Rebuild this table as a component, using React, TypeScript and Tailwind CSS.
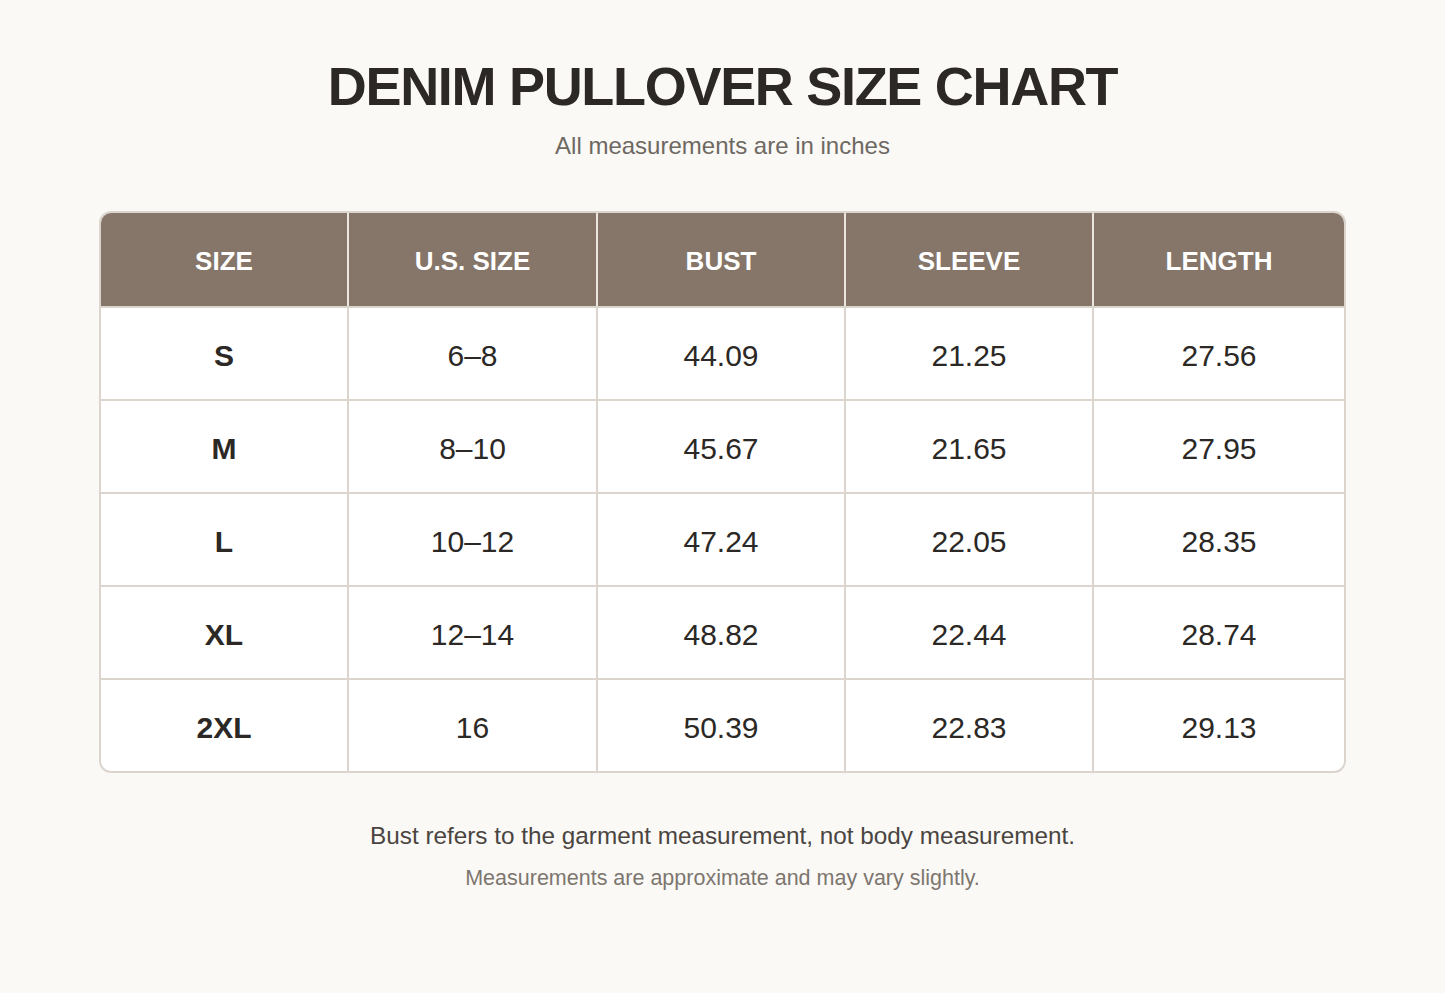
import React from "react";

const rows = [
  ["S", "6–8", "44.09", "21.25", "27.56"],
  ["M", "8–10", "45.67", "21.65", "27.95"],
  ["L", "10–12", "47.24", "22.05", "28.35"],
  ["XL", "12–14", "48.82", "22.44", "28.74"],
  ["2XL", "16", "50.39", "22.83", "29.13"],
];
const heads = ["SIZE", "U.S. SIZE", "BUST", "SLEEVE", "LENGTH"];

export default function App() {
  return (
    <div
      className="min-h-[993px] w-full bg-[#faf9f6] text-[#2b2825]"
      style={{ fontFamily: '"Liberation Sans", Arial, sans-serif' }}
    >
      <div className="pt-[57px] text-center">
        <h1 className="text-[54px] font-bold leading-[58px] tracking-[-1.3px] text-[#2b2825]">
          DENIM PULLOVER SIZE CHART
        </h1>
        <p className="mt-[17px] text-[24px] leading-[28px] text-[#6e6862]">
          All measurements are in inches
        </p>
      </div>
      <div className="mx-auto mt-[51px] w-[1247px] overflow-hidden rounded-[12px] border-2 border-[#dbd5ce] bg-white">
        <div className="grid grid-cols-[246px_249px_248px_248px_1fr] bg-[#857669]">
          {heads.map((h, i) => (
            <div
              key={h}
              className={`flex h-[93px] items-center justify-center pt-[4px] text-[26px] font-bold text-white ${i > 0 ? "border-l-2 border-[#ebe6e0]" : ""}`}
            >
              {h}
            </div>
          ))}
        </div>
        {rows.map((r) => (
          <div key={r[0]} className="grid grid-cols-[246px_249px_248px_248px_1fr] border-t-2 border-[#dbd5ce]">
            {r.map((c, i) => (
              <div
                key={i}
                className={`flex h-[91px] items-center justify-center pt-[3px] text-[30px] text-[#2b2825] ${i === 0 ? "font-bold" : ""} ${i > 0 ? "border-l-2 border-[#dbd5ce]" : ""}`}
              >
                {c}
              </div>
            ))}
          </div>
        ))}
      </div>
      <div className="mt-[49px] text-center">
        <p className="text-[24.3px] leading-[28px] text-[#4a4541]">
          Bust refers to the garment measurement, not body measurement.
        </p>
        <p className="mt-[16px] text-[21.5px] leading-[24px] text-[#7d766f]">
          Measurements are approximate and may vary slightly.
        </p>
      </div>
    </div>
  );
}
